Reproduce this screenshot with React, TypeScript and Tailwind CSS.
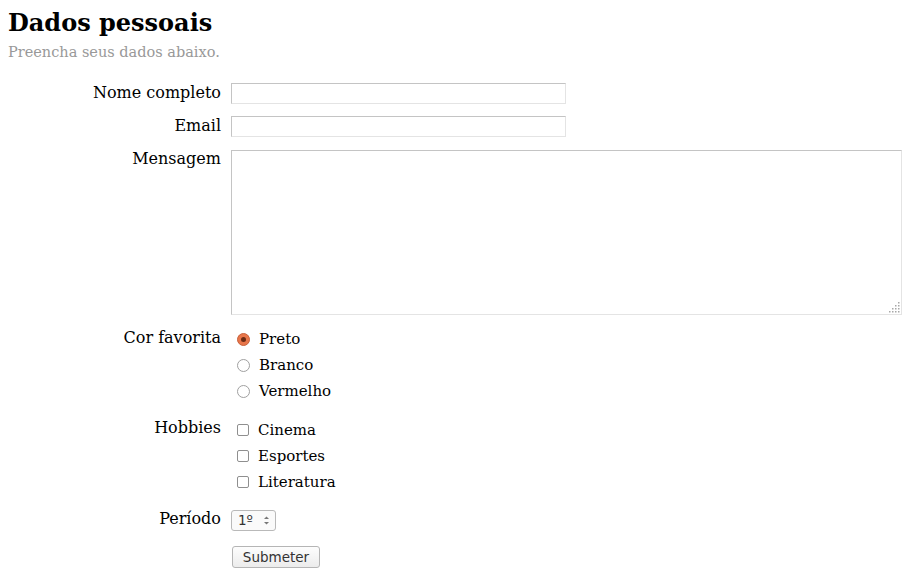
import React from "react";

const serif = "font-['DejaVu_Serif',serif]";
const sans = "font-['DejaVu_Sans',sans-serif]";

function Radio({ checked, label }: { checked?: boolean; label: string }) {
  return (
    <div className="flex h-[26px] items-center">
      <span
        className={
          checked
            ? "ml-[6px] flex h-[13px] w-[13px] items-center justify-center rounded-full border border-[#c8603a] bg-[#e8764a]"
            : "ml-[6px] h-[13px] w-[13px] rounded-full border border-[#a0a0a0] bg-white"
        }
      >
        {checked && <span className="h-[5px] w-[5px] rounded-full bg-[#6b2b14]" />}
      </span>
      <span className="ml-[9px]">{label}</span>
    </div>
  );
}

function Check({ label }: { label: string }) {
  return (
    <div className="flex h-[26px] items-center">
      <span className="ml-[6px] h-[12px] w-[12px] rounded-[2px] border border-[#8f8f8f] bg-white" />
      <span className="ml-[9px]">{label}</span>
    </div>
  );
}

function Grip() {
  const dots = [
    [9, 0],
    [9, 3], [6, 3],
    [9, 6], [6, 6], [3, 6],
    [9, 9], [6, 9], [3, 9], [0, 9],
  ];
  return (
    <svg className="pointer-events-none absolute bottom-[2px] right-[2px]" width="11" height="11" viewBox="0 0 11 11">
      {dots.map(([x, y], i) => (
        <rect key={i} x={x} y={y} width="1.5" height="1.5" fill="#a8a8a8" />
      ))}
    </svg>
  );
}

export default function App() {
  return (
    <div className={`${serif} min-h-[578px] w-[915px] bg-white text-black`}>
      <div className="px-2 pt-[7px]">
        <h1 className="m-0 text-[24px] font-bold leading-[32px]">Dados pessoais</h1>
        <p className="m-0 mt-[3px] text-[14.5px] leading-[20px] text-[#999]">Preencha seus dados abaixo.</p>
      </div>

      <div className="mt-[21px] text-[16px]">
        <div className="flex items-start">
          <label className="w-[221px] shrink-0 text-right leading-[19px]">Nome completo</label>
          <input className="ml-[10px] h-[21px] w-[335px] border border-[#e4e4e4] border-l-[#c4c4c4] border-t-[#c4c4c4] outline-none" />
        </div>
        <div className="mt-[12px] flex items-start">
          <label className="w-[221px] shrink-0 text-right leading-[19px]">Email</label>
          <input className="ml-[10px] h-[21px] w-[335px] border border-[#e4e4e4] border-l-[#c4c4c4] border-t-[#c4c4c4] outline-none" />
        </div>
        <div className="mt-[13px] flex items-start">
          <label className="w-[221px] shrink-0 text-right leading-[18px]">Mensagem</label>
          <div className="relative ml-[10px]">
            <textarea className="block h-[165px] w-[671px] resize-none border border-[#e4e4e4] border-l-[#c4c4c4] border-t-[#c4c4c4] outline-none" />
            <Grip />
          </div>
        </div>
        <div className="mt-[11px] flex items-start">
          <label className="w-[221px] shrink-0 text-right leading-[24px]">Cor favorita</label>
          <div className="ml-[10px] text-[15px]">
            <Radio checked label="Preto" />
            <Radio label="Branco" />
            <Radio label="Vermelho" />
          </div>
        </div>
        <div className="mt-[13px] flex items-start">
          <label className="w-[221px] shrink-0 text-right leading-[22px]">Hobbies</label>
          <div className="ml-[10px] text-[15px]">
            <Check label="Cinema" />
            <Check label="Esportes" />
            <Check label="Literatura" />
          </div>
        </div>
        <div className="mt-[15px] flex items-start">
          <label className="w-[221px] shrink-0 text-right leading-[17px]">Período</label>
          <div className={`${sans} ml-[10px] flex h-[21px] w-[45px] items-center justify-between rounded-[3px] border border-[#b9b9b9] bg-[#fafafa] pl-[6px] pr-[5px] text-[13.5px] text-[#333]`}>
            <span>1º</span>
            <svg width="7" height="11" viewBox="0 0 7 11">
              <path d="M1 4 L3.5 1.5 L6 4 Z" fill="#777" />
              <path d="M1 7 L3.5 9.5 L6 7 Z" fill="#777" />
            </svg>
          </div>
        </div>
        <div className="mt-[15px] flex">
          <div className="w-[221px] shrink-0" />
          <button className={`${sans} ml-[11px] h-[22px] w-[88px] rounded-[3px] border border-[#b5b5b5] bg-gradient-to-b from-[#fdfdfd] to-[#ececec] text-[13.5px] leading-[20px] text-[#333]`}>
            Submeter
          </button>
        </div>
      </div>
    </div>
  );
}
